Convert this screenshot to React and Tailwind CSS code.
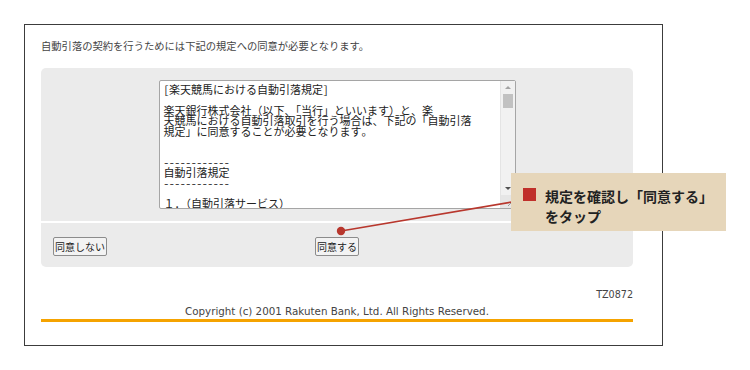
export default function App() {
  const rules = [
    "[楽天競馬における自動引落規定]",
    "",
    "楽天銀行株式会社（以下、「当行」といいます）と、楽",
    "天競馬における自動引落取引を行う場合は、下記の「自動引落",
    "規定」に同意することが必要となります。",
    "",
    "",
    "------------",
    "自動引落規定",
    "------------",
    "",
    "１．（自動引落サービス）",
    "当行は、楽天競馬における勝馬投票券の購入代金等を",
    "お客さまの口座から自動で引落します。",
  ];

  return (
    <div className="relative w-[750px] h-[370px] bg-white overflow-hidden">
      {/* page frame */}
      <div className="ml-[24px] mt-[24px] w-[639px] h-[322px] border border-[#3c3c3c] px-[16px] text-[#333]">
        <p className="mt-[14px] h-[14px] leading-[14px] text-[10.3px] font-['Noto_Sans_CJK_JP',sans-serif] text-[#444]">
          自動引落の契約を行うためには下記の規定への同意が必要となります。
        </p>

        <div className="mt-[15px] w-[592px]">
          <div className="h-[153px] rounded-t-[5px] bg-[#ebebeb] flex justify-center pt-[12px]">
            {/* rules textarea */}
            <div className="w-[357px] h-[129px] flex border border-[#a5a5a5] rounded-[2px] bg-white">
              <div className="flex-1 overflow-hidden pl-[4px] pt-[3px] text-[11px] leading-[10.4px] text-[#222] whitespace-pre font-['Noto_Sans_Mono_CJK_JP','Noto_Sans_CJK_JP',monospace]">
                {rules.map((line, i) => (
                  <div key={i} className="h-[10.4px]">{line}</div>
                ))}
              </div>
              <div className="w-[15px] flex flex-col bg-[#f1f1f1] border-l border-[#e4e4e4]">
                <div className="h-[13px] flex items-center justify-center">
                  <div className="w-0 h-0 border-l-[3px] border-r-[3px] border-b-[3px] border-l-transparent border-r-transparent border-b-[#a3a3a3]" />
                </div>
                <div className="mx-[2px] h-[14px] bg-[#c1c1c1]" />
                <div className="flex-1" />
                <div className="h-[13px] flex items-center justify-center">
                  <div className="w-0 h-0 border-l-[3px] border-r-[3px] border-t-[3px] border-l-transparent border-r-transparent border-t-[#505050]" />
                </div>
                <div className="h-[13px] bg-[#e6e6e6] flex items-end justify-end p-[1px]">
                  <svg width="7" height="7" viewBox="0 0 7 7">
                    <path d="M1 6 L6 1 M4 6 L6 4" stroke="#9a9a9a" strokeWidth="1" />
                  </svg>
                </div>
              </div>
            </div>
          </div>

          {/* buttons */}
          <div className="mt-[2px] h-[44px] rounded-b-[5px] bg-[#ebebeb] grid grid-cols-[1fr_auto_1fr] items-start pt-[14px] px-[12px] text-[10px] font-['Noto_Sans_CJK_JP',sans-serif] text-[#222]">
            <div>
              <button className="h-[19px] w-[54px] border border-[#8c8c8c] rounded-[2px] bg-[#f3f3f3] leading-[17px]">
                同意しない
              </button>
            </div>
            <button className="h-[19px] w-[44px] border border-[#8c8c8c] rounded-[2px] bg-[#f3f3f3] leading-[17px]">
              同意する
            </button>
            <div />
          </div>
        </div>

        {/* footer */}
        <div className="w-[592px] mt-[23px] font-['DejaVu_Sans',sans-serif] text-[#444]">
          <div className="text-right text-[9.6px] leading-[10px]">TZ0872</div>
          <div className="text-center text-[10.3px] leading-[12px] mt-[5px]">
            Copyright (c) 2001 Rakuten Bank, Ltd. All Rights Reserved.
          </div>
          <div className="mt-[2px] h-[3px] bg-[#f5a300]" />
        </div>
      </div>

      {/* annotation pointer */}
      <svg className="absolute left-0 top-0" width="750" height="370">
        <line x1="341" y1="231" x2="512" y2="202" stroke="#b8372d" strokeWidth="1.6" />
        <circle cx="341" cy="231" r="4.2" fill="#b8372d" />
      </svg>

      {/* callout */}
      <div className="absolute left-[511px] top-[173px] w-[215px] h-[58px] bg-[#e6d6ba] pl-[12px] pt-[14px] flex gap-[9px] font-['Noto_Sans_CJK_JP',sans-serif] text-[#222]">
        <div className="w-[13px] h-[13px] mt-[1px] bg-[#c0302a] shrink-0" />
        <div className="text-[14px] leading-[20px] font-bold -mt-[1px]">
          規定を確認し「同意する」
          <br />
          をタップ
        </div>
      </div>
    </div>
  );
}
